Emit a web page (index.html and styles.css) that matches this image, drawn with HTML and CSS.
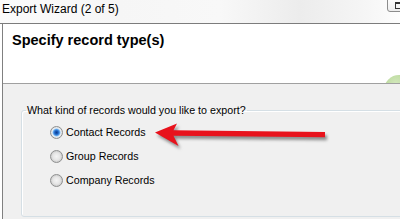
FILE: index.html
```html
<!DOCTYPE html>
<html>
<head>
<meta charset="utf-8">
<link rel="stylesheet" href="styles.css">
</head>
<body>
<div class="window">
  <div class="titlebar">
    <span class="title">Export Wizard (2 of 5)</span>
    <span class="corner-btn"><span class="corner-glyph"></span></span>
  </div>
  <div class="body">
    <div class="header">
      <div class="heading">Specify record type(s)</div>
      <span class="logo-blob"></span>
    </div>
    <div class="content">
      <fieldset class="group">
        <legend class="group-legend">What kind of records would you like to export?</legend>
        <div class="option"><span class="radio checked"></span><span class="label">Contact Records</span></div>
        <div class="option"><span class="radio"></span><span class="label">Group Records</span></div>
        <div class="option"><span class="radio"></span><span class="label">Company Records</span></div>
      </fieldset>
    </div>
  </div>
  <svg class="arrow" width="400" height="219" viewBox="0 0 400 219">
    <polygon points="155,132.5 177,123.5 173.5,130.3 325,132 325,137.2 173.5,135.8 178.5,146" fill="#e8121c"/>
  </svg>
</div>
</body>
</html>
```
FILE: styles.css
```css
html, body {
  margin: 0;
  padding: 0;
  background: #ffffff;
}
body {
  width: 400px;
  height: 219px;
  overflow: hidden;
  font-family: "Liberation Sans", Arial, sans-serif;
  color: #000;
}
.window {
  position: relative;
  width: 400px;
  height: 219px;
  display: flex;
  flex-direction: column;
  overflow: hidden;
}
.titlebar {
  position: relative;
  height: 23px;
  border-bottom: 1px solid #7c7c7c;
  background: linear-gradient(to right, #fbfbfb 0%, #f6f6f6 30%, #f8f8f8 55%, #ececec 75%, #f6f6f6 92%, #fdfdfd 100%);
  padding-left: 2px;
  font-size: 12px;
  line-height: 18px;
  flex: none;
}
.title {
  color: #000;
}
.corner-btn {
  position: absolute;
  left: 387px;
  top: -3px;
  width: 22px;
  height: 15px;
  border: 1px solid #8c8c8c;
  border-radius: 3px;
  background: linear-gradient(#ffffff, #ededed);
  box-sizing: border-box;
}
.corner-glyph {
  position: absolute;
  left: 7px;
  top: 4px;
  width: 6px;
  height: 7px;
  border: 1px solid #333;
  border-top-width: 2px;
  box-sizing: border-box;
}
.body {
  flex: 1;
  margin-left: 2px;
  border-left: 1px solid #808080;
  display: flex;
  flex-direction: column;
  min-height: 0;
}
.header {
  position: relative;
  height: 59px;
  background: #ffffff;
  border-bottom: 1px solid #a0a0a0;
  overflow: hidden;
  flex: none;
}
.heading {
  padding-top: 7px;
  padding-left: 9px;
  font-size: 14.5px;
  line-height: 18px;
  font-weight: bold;
  color: #000;
}
.logo-blob {
  position: absolute;
  left: 381px;
  top: 51px;
  width: 30px;
  height: 30px;
  border-radius: 50%;
  background: radial-gradient(circle at 40% 30%, #d3e8bd 0%, #b3d592 60%, #a9cf86 100%);
}
.content {
  flex: 1;
  background: #f0f0f0;
  padding-top: 20px;
  overflow: hidden;
  min-height: 0;
}
.group {
  margin: 0 0 0 18px;
  width: 420px;
  box-sizing: border-box;
  padding: 3px 0 24px 0;
  border: 1px solid #d5dfe5;
  border-radius: 3px;
  box-shadow: inset 1px 1px 0 #ffffff;
}
.group-legend {
  margin-left: 4px;
  padding: 0 1px;
  font-size: 10.7px;
  line-height: 13px;
  color: #000;
}
.option {
  display: flex;
  align-items: center;
  gap: 3px;
  height: 24px;
  padding-left: 28px;
  font-size: 10.7px;
  line-height: 13px;
}
.radio {
  width: 13px;
  height: 13px;
  box-sizing: border-box;
  border-radius: 50%;
  border: 1px solid #8e8f8f;
  background: radial-gradient(circle at 50% 50%, #f4f4f4 0%, #e6e6e6 45%, #d0d0d0 70%, #f2f2f2 100%);
  flex: none;
}
.radio.checked {
  background: radial-gradient(circle at 50% 50%, #0b3f8f 0%, #1c5fc0 22%, #4f9be8 38%, #9cc9f3 48%, #e9eef3 56%, #dcdcdc 75%, #f3f3f3 100%);
}
.label {
  color: #000;
}
.arrow {
  position: absolute;
  left: 0;
  top: 0;
  pointer-events: none;
  filter: drop-shadow(2px 3px 1.5px rgba(60, 60, 60, 0.55));
}
```
